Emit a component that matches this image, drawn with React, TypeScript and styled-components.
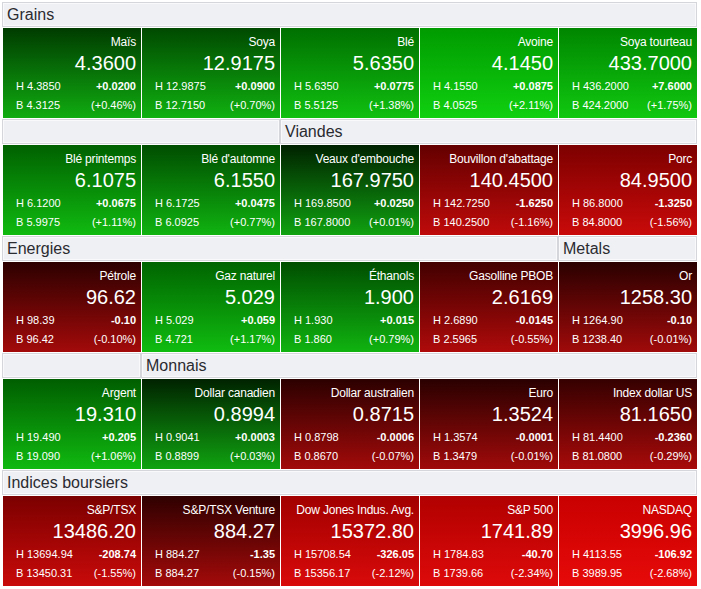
import styled, { createGlobalStyle } from "styled-components";

type Quote = {
    name: string;
    value: string;
    high: string;
    low: string;
    change: string;
    pct: number;
};

type Head = { label: string; span: number };

type Section = { heads: Head[]; quotes: Quote[] };

const q = (name: string, value: string, high: string, change: string, low: string, pct: number): Quote => ({
    name, value, high, low, change, pct,
});

const sections: Section[] = [
    {
        heads: [{label: "Grains", span: 5}],
        quotes: [
            q("Maïs", "4.3600", "4.3850", "+0.0200", "4.3125", 0.46),
            q("Soya", "12.9175", "12.9875", "+0.0900", "12.7150", 0.70),
            q("Blé", "5.6350", "5.6350", "+0.0775", "5.5125", 1.38),
            q("Avoine", "4.1450", "4.1550", "+0.0875", "4.0525", 2.11),
            q("Soya tourteau", "433.7000", "436.2000", "+7.6000", "424.2000", 1.75),
        ],
    },
    {
        heads: [{label: "", span: 2}, {label: "Viandes", span: 3}],
        quotes: [
            q("Blé printemps", "6.1075", "6.1200", "+0.0675", "5.9975", 1.11),
            q("Blé d'automne", "6.1550", "6.1725", "+0.0475", "6.0925", 0.77),
            q("Veaux d'embouche", "167.9750", "169.8500", "+0.0250", "167.8000", 0.01),
            q("Bouvillon d'abattage", "140.4500", "142.7250", "-1.6250", "140.2500", -1.16),
            q("Porc", "84.9500", "86.8000", "-1.3250", "84.8000", -1.56),
        ],
    },
    {
        heads: [{label: "Energies", span: 4}, {label: "Metals", span: 1}],
        quotes: [
            q("Pétrole", "96.62", "98.39", "-0.10", "96.42", -0.10),
            q("Gaz naturel", "5.029", "5.029", "+0.059", "4.721", 1.17),
            q("Éthanols", "1.900", "1.930", "+0.015", "1.860", 0.79),
            q("Gasolline PBOB", "2.6169", "2.6890", "-0.0145", "2.5965", -0.55),
            q("Or", "1258.30", "1264.90", "-0.10", "1238.40", -0.01),
        ],
    },
    {
        heads: [{label: "", span: 1}, {label: "Monnais", span: 4}],
        quotes: [
            q("Argent", "19.310", "19.490", "+0.205", "19.090", 1.06),
            q("Dollar canadien", "0.8994", "0.9041", "+0.0003", "0.8899", 0.03),
            q("Dollar australien", "0.8715", "0.8798", "-0.0006", "0.8670", -0.07),
            q("Euro", "1.3524", "1.3574", "-0.0001", "1.3479", -0.01),
            q("Index dollar US", "81.1650", "81.4400", "-0.2360", "81.0800", -0.29),
        ],
    },
    {
        heads: [{label: "Indices boursiers", span: 5}],
        quotes: [
            q("S&P/TSX", "13486.20", "13694.94", "-208.74", "13450.31", -1.55),
            q("S&P/TSX Venture", "884.27", "884.27", "-1.35", "884.27", -0.15),
            q("Dow Jones Indus. Avg.", "15372.80", "15708.54", "-326.05", "15356.17", -2.12),
            q("S&P 500", "1741.89", "1784.83", "-40.70", "1739.66", -2.34),
            q("NASDAQ", "3996.96", "4113.55", "-106.92", "3989.95", -2.68),
        ],
    },
];

// tile shade follows the size of the move
const tileGradient = (pct: number) => {
    if (pct >= 0) {
        const t = Math.min(pct / 2.2, 1);
        const top = Math.round(32 + 128 * t);
        const bottom = Math.round(162 + 48 * t);
        return `linear-gradient(to bottom, rgb(0, ${top}, 0), rgb(16, ${bottom}, 16))`;
    }
    const t = Math.min(-pct / 2.7, 1);
    const top = Math.round(42 + 160 * Math.pow(t, 1.2));
    const bottom = Math.round(160 + 72 * t);
    return `linear-gradient(to bottom, rgb(${top}, 0, 0), rgb(${bottom}, 10, 10))`;
};

const fmtPct = (pct: number) => `(${pct >= 0 ? "+" : ""}${pct.toFixed(2)}%)`;

const Tile = ({quote}: { quote: Quote }) => (
    <StyledTile $pct={quote.pct}>
        <StyledName>{quote.name}</StyledName>
        <StyledValue>{quote.value}</StyledValue>
        <StyledLine>
            <span>H {quote.high}</span>
            <StyledChange>{quote.change}</StyledChange>
        </StyledLine>
        <StyledLine>
            <span>B {quote.low}</span>
            <span>{fmtPct(quote.pct)}</span>
        </StyledLine>
    </StyledTile>
);

export default function App() {
    return (
        <>
            <GlobalStyle/>
            <StyledBoard>
                {sections.map((section, i) => (
                    <StyledSection key={i}>
                        {section.heads.map((head, j) => (
                            <StyledHeader key={j} $span={head.span}>{head.label}</StyledHeader>
                        ))}
                        {section.quotes.map((quote) => (
                            <Tile key={quote.name} quote={quote}/>
                        ))}
                    </StyledSection>
                ))}
            </StyledBoard>
        </>
    );
}

const GlobalStyle = createGlobalStyle`
    html, body {
        margin: 0;
        padding: 0;
        background: #fff;
    }

    body {
        font-family: "Liberation Sans", Arial, Helvetica, sans-serif;
    }
`

const StyledBoard = styled.div`
    display: flex;
    flex-direction: column;
    gap: 1px;
    padding: 2px 0 0 3px;
`

const StyledSection = styled.div`
    display: grid;
    grid-template-columns: repeat(5, 138px);
    grid-template-rows: 25px 90px;
    gap: 1px;
`

const StyledHeader = styled.div<{ $span: number }>`
    grid-column: span ${(p) => p.$span};
    box-sizing: border-box;
    height: 25px;
    margin-left: -1px;
    padding: 1px 0 0 4px;
    border: 1px solid #d5d6db;
    box-shadow: inset 0 0 0 1px #f9f9fb;
    background: #eff0f4;
    color: #2a2b30;
    font-size: 16px;
    line-height: 22px;
    white-space: nowrap;
`

const StyledTile = styled.div<{ $pct: number }>`
    display: flex;
    flex-direction: column;
    box-sizing: border-box;
    height: 90px;
    padding: 6px 5px 0 13px;
    background: ${(p) => tileGradient(p.$pct)};
    color: #fff;
`

const StyledName = styled.div`
    font-size: 12px;
    line-height: 16px;
    text-align: right;
    white-space: nowrap;
    letter-spacing: -0.2px;
`

const StyledValue = styled.div`
    font-size: 20px;
    line-height: 24px;
    padding-top: 1px;
    text-align: right;
    margin-bottom: 2px;
`

const StyledLine = styled.div`
    display: flex;
    justify-content: space-between;
    font-size: 11px;
    line-height: 19px;
`

const StyledChange = styled.span`
    font-weight: 700;
`
